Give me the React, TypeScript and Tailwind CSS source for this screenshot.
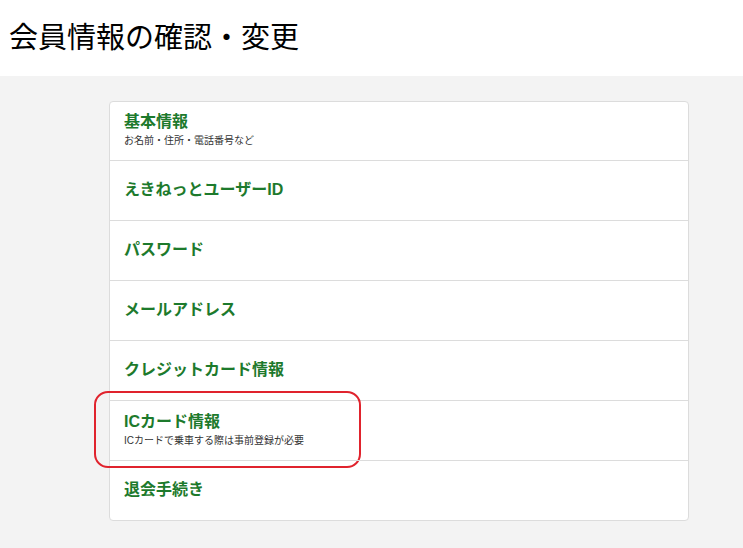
const items = [
  { title: '基本情報', sub: 'お名前・住所・電話番号など' },
  { title: 'えきねっとユーザーID' },
  { title: 'パスワード' },
  { title: 'メールアドレス' },
  { title: 'クレジットカード情報' },
  { title: 'ICカード情報', sub: 'ICカードで乗車する際は事前登録が必要', mark: true },
  { title: '退会手続き' },
];

export default function App() {
  return (
    <div className="min-h-[548px] bg-[#f3f3f3] font-['Liberation_Sans','Noto_Sans_CJK_JP',sans-serif]">
      <header className="bg-white h-[76px] pl-[9px] pt-[19px]">
        <h1 className="text-[29px] leading-[38px] text-black">会員情報の確認・変更</h1>
      </header>

      <div className="pt-[25px] pl-[109px]">
        <ul className="w-[580px] bg-white border border-[#dcdcdc] rounded-[4px]">
          {items.map((item, i) => (
            <li
              key={item.title}
              className={`relative flex flex-col justify-center px-[14px] pb-[2px] ${
                i > 0 ? 'h-[60px] border-t border-[#dcdcdc]' : 'h-[58px]'
              }`}
            >
              <div className="text-[16px] leading-[21px] font-bold text-[#1d7a2c]">{item.title}</div>
              {item.sub && (
                <div className="text-[10px] leading-[16px] mt-[1px] text-[#333]">{item.sub}</div>
              )}
              {item.mark && (
                <div className="absolute left-[-16px] top-[-10px] w-[267px] h-[77px] border-2 border-[#e0232d] rounded-[14px] pointer-events-none" />
              )}
            </li>
          ))}
        </ul>
      </div>
    </div>
  );
}
